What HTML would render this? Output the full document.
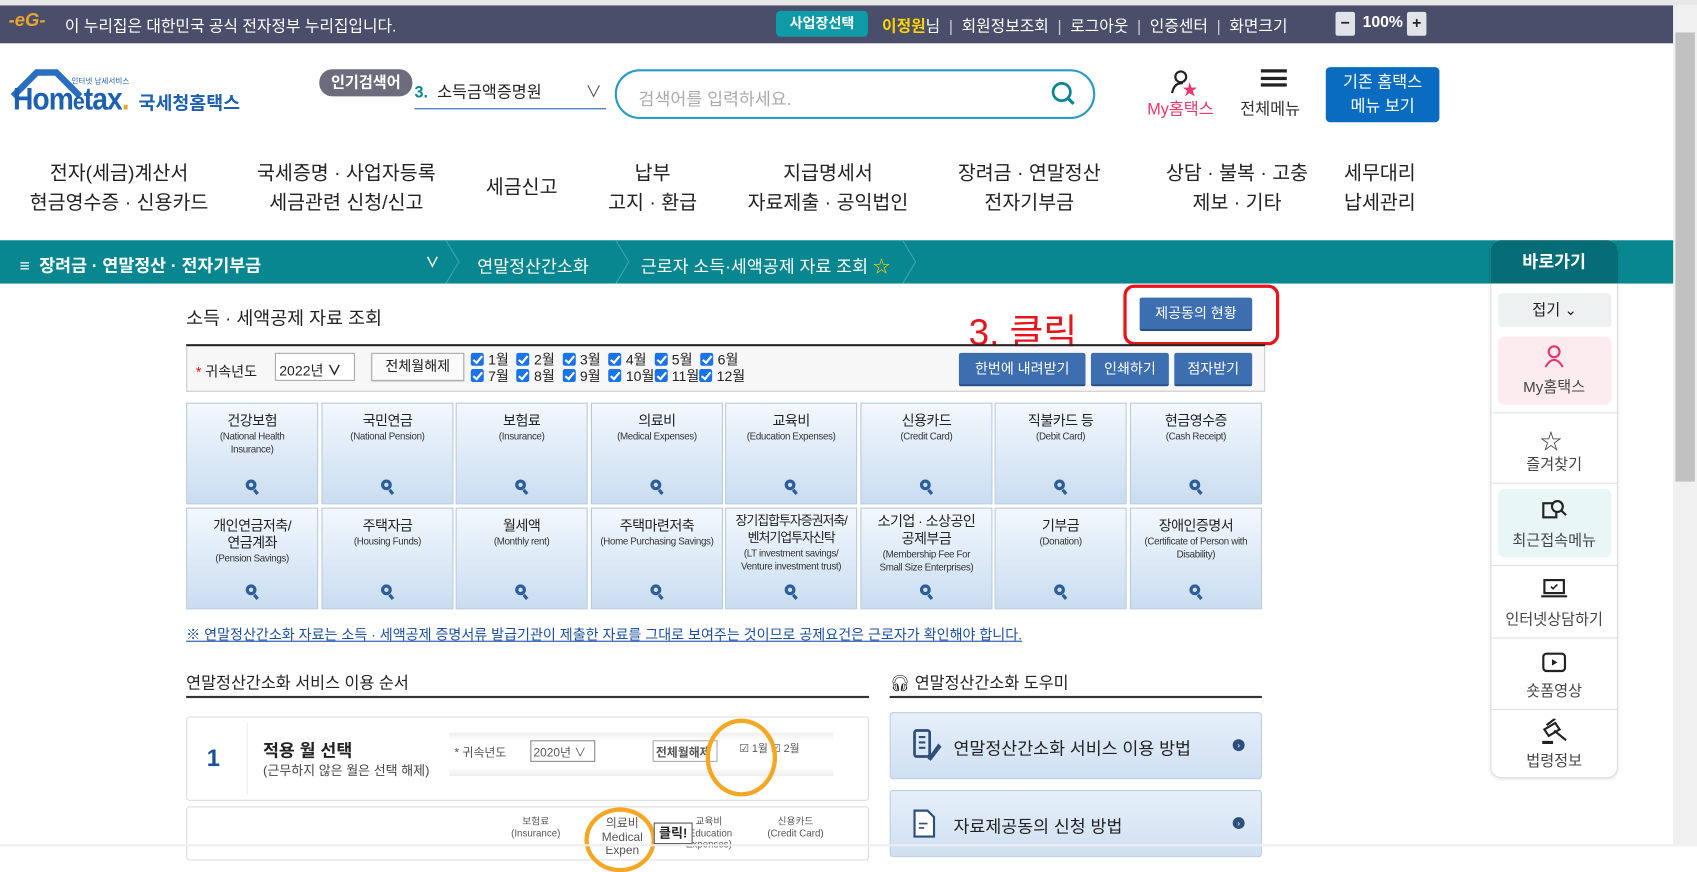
<!DOCTYPE html>
<html><head><meta charset="utf-8"><style>
*{box-sizing:border-box;margin:0;padding:0}
html,body{width:1697px;height:846px;overflow:hidden;background:#fff}
#w{position:absolute;left:0;top:0;width:1568px;height:782px;transform:scale(1.08227);transform-origin:0 0;font-family:"Liberation Sans","Noto Sans CJK KR",sans-serif;color:#222}
.a{position:absolute}
.top{left:0;top:5px;width:1546px;height:35px;background:#4a4e6a;color:#fff;font-size:14.6px}
.top .s{margin:0 8px;color:#ccc}
.nav{font-size:18px;text-align:center;line-height:27px;color:#222}
.teal{left:0;top:222px;width:1546px;height:40px;background:#088791;color:#fff;font-size:16px;font-weight:bold}
.tile{position:absolute;width:122px;height:94px;border:1px solid #b6c9dc;background:linear-gradient(#f3f8fd,#c9ddf0);text-align:center;font-size:12px;color:#222;padding-top:8px;line-height:14px}
.tile b{display:block;font-weight:normal;font-size:13px;line-height:16px;white-space:nowrap;letter-spacing:-.5px}
.tile small{font-size:9px;color:#333;letter-spacing:-.3px;display:block;line-height:12px;white-space:nowrap}
.tile i{position:absolute;left:54px;bottom:12px;width:10px;height:10px;border:3px solid #2e5e99;border-radius:50%}
.tile i:after{content:"";position:absolute;left:5px;top:6px;width:3px;height:5px;background:#2e5e99;transform:rotate(-40deg)}
.bb{position:absolute;background:#3d6eb0;color:#fff;font-size:13px;text-align:center;border-radius:2px;border-bottom:2px solid #274f85}
.cb{display:inline-block;width:12px;height:12px;background:#1a73e8;border-radius:2px;vertical-align:-1px;margin-right:4px;position:relative}
.cb:after{content:"";position:absolute;left:4px;top:1px;width:3px;height:7px;border:solid #fff;border-width:0 2px 2px 0;transform:rotate(40deg)}
.side{font-size:14px;color:#444;text-align:center}
</style></head><body><div id="w">
<div class="a" style="left:0;top:0;width:1568px;height:5px;background:#e8e8e8"></div>
<div class="a top">
 <span class="a" style="left:8px;top:4px;color:#e8a630;font-weight:bold;font-style:italic;font-size:17px">-eG-</span>
 <span class="a" style="left:60px;top:8px">이 누리집은 대한민국 공식 전자정부 누리집입니다.</span>
 <span class="a" style="left:717px;top:5px;width:85px;height:24px;background:#0f9aa8;border-radius:4px;text-align:center;line-height:24px;font-weight:bold;font-size:13px">사업장선택</span>
 <span class="a" style="left:815px;top:8px;white-space:nowrap"><b style="color:#ffd400">이정원</b>님<span class="s">|</span>회원정보조회<span class="s">|</span>로그아웃<span class="s">|</span>인증센터<span class="s">|</span>화면크기</span>
 <span class="a" style="left:1234px;top:6px;width:18px;height:22px;background:#e0e4e8;color:#222;text-align:center;font-weight:bold;line-height:22px;border-radius:2px">−</span>
 <span class="a" style="left:1259px;top:8px;font-weight:bold">100%</span>
 <span class="a" style="left:1300px;top:6px;width:18px;height:22px;background:#e0e4e8;color:#222;text-align:center;font-weight:bold;line-height:22px;border-radius:2px">+</span>
</div>
<div class="a" style="left:1546px;top:5px;width:22px;height:777px;background:#f0f0f0"></div>
<div class="a" style="left:1548px;top:30px;width:18px;height:415px;background:#c1c1c1"></div>
<!-- logo -->
<svg class="a" style="left:8px;top:63px" width="70" height="30"><path d="M4 26 L26 4 L44 4 L66 26" fill="none" stroke="#2a6fbf" stroke-width="6"/></svg>
<div class="a" style="left:12px;top:76px;font-size:29px;font-weight:bold;color:#1d5fb0;letter-spacing:-1px;transform:scaleX(.9);transform-origin:0 0">Hom<span style="font-size:22px">e</span>tax<span style="color:#e8a630">.</span></div>
<div class="a" style="left:66px;top:70px;font-size:7px;color:#1d5fb0">인터넷 납세서비스</div>
<div class="a" style="left:128px;top:81px;font-size:17px;font-weight:bold;color:#1d5fb0">국세청홈택스</div>
<div class="a" style="left:295px;top:64px;width:86px;height:25px;background:#6b6d7c;border-radius:12px;color:#fff;font-size:14px;font-weight:bold;text-align:center;line-height:25px">인기검색어</div>
<div class="a" style="left:383px;top:74px;width:177px;height:27px;border-bottom:1px solid #1d5fb0;font-size:15px"><b style="color:#0a8791">3.</b>&nbsp; 소득금액증명원<span style="position:absolute;right:4px;color:#555">∨</span></div>
<div class="a" style="left:568px;top:64px;width:444px;height:46px;border:2px solid #2a9ac8;border-radius:24px;font-size:16px;color:#aaa;padding:12px 20px">검색어를 입력하세요.</div>
<svg class="a" style="left:970px;top:74px" width="26" height="26"><circle cx="11" cy="11" r="8" fill="none" stroke="#0a8791" stroke-width="2.5"/><path d="M17 17 L22 22" stroke="#0a8791" stroke-width="3"/></svg>
<svg class="a" style="left:1080px;top:64px" width="30" height="26"><circle cx="11" cy="7" r="5" fill="none" stroke="#222" stroke-width="2"/><path d="M3 22 Q5 12 13 13" fill="none" stroke="#222" stroke-width="2"/><path d="M19 12 L21 17 L26 17 L22 20 L24 25 L19 22 L15 25 L17 20 L13 17 L18 17Z" fill="#e8366a"/></svg>
<div class="a" style="left:1060px;top:90px;font-size:15px;color:#e8366a">My홈택스</div>
<div class="a" style="left:1165px;top:64px;width:24px;height:16px;border-top:3px solid #222;border-bottom:3px solid #222"><div style="margin-top:4px;height:3px;background:#222"></div></div>
<div class="a" style="left:1146px;top:90px;font-size:15px;color:#333">전체메뉴</div>
<div class="a" style="left:1225px;top:62px;width:105px;height:51px;background:#0a6cc0;border-radius:4px;color:#fff;font-size:15px;text-align:center;line-height:22px;padding-top:4px">기존 홈택스<br>메뉴 보기</div>
<!-- nav -->
<div class="a nav" style="left:20px;top:147px;width:180px">전자(세금)계산서<br>현금영수증 · 신용카드</div>
<div class="a nav" style="left:220px;top:147px;width:200px">국세증명 · 사업자등록<br>세금관련 신청/신고</div>
<div class="a nav" style="left:432px;top:160px;width:100px">세금신고</div>
<div class="a nav" style="left:553px;top:147px;width:100px">납부<br>고지 · 환급</div>
<div class="a nav" style="left:675px;top:147px;width:180px">지급명세서<br>자료제출 · 공익법인</div>
<div class="a nav" style="left:861px;top:147px;width:180px">장려금 · 연말정산<br>전자기부금</div>
<div class="a nav" style="left:1053px;top:147px;width:180px">상담 · 불복 · 고충<br>제보 · 기타</div>
<div class="a nav" style="left:1225px;top:147px;width:100px">세무대리<br>납세관리</div>
<!-- teal bar -->
<div class="a teal">
 <span class="a" style="left:18px;top:10px">≡ &nbsp;장려금 · 연말정산 · 전자기부금</span>
 <span class="a" style="left:393px;top:10px;font-size:13px">∨</span>
 <svg class="a" style="left:410px;top:0" width="20" height="40"><path d="M2 0 L14 20 L2 40" fill="none" stroke="#3aa5ad" stroke-width="1"/></svg>
 <span class="a" style="left:441px;top:11px;font-weight:normal">연말정산간소화</span>
 <svg class="a" style="left:567px;top:0" width="20" height="40"><path d="M2 0 L14 20 L2 40" fill="none" stroke="#3aa5ad" stroke-width="1"/></svg>
 <span class="a" style="left:592px;top:11px;font-weight:normal">근로자 소득·세액공제 자료 조회 <span style="color:#ffd400">☆</span></span>
 <svg class="a" style="left:832px;top:0" width="20" height="40"><path d="M2 0 L14 20 L2 40" fill="none" stroke="#3aa5ad" stroke-width="1"/></svg>
</div>
<!-- side panel -->
<div class="a" style="left:1377px;top:222px;width:118px;height:497px;background:#fff;border:1px solid #ddd;border-radius:10px;box-shadow:0 1px 3px rgba(0,0,0,.1)"></div>
<div class="a" style="left:1377px;top:222px;width:118px;height:40px;background:#066c76;border-radius:10px 10px 0 0;color:#fff;font-weight:bold;font-size:16px;text-align:center;line-height:42px">바로가기</div>
<div class="a side" style="left:1384px;top:271px;width:105px;height:31px;background:#eef1f1;border-radius:4px;line-height:31px;color:#222">접기 ⌄</div>
<div class="a side" style="left:1384px;top:311px;width:105px;height:63px;background:#fcebef;border-radius:6px"></div>
<svg class="a" style="left:1425px;top:318px" width="22" height="22"><circle cx="11" cy="7" r="5" fill="none" stroke="#e8366a" stroke-width="2"/><path d="M3 21 Q11 8 19 21" fill="none" stroke="#e8366a" stroke-width="2"/></svg>
<div class="a side" style="left:1377px;top:347px;width:118px">My홈택스</div>
<div class="a" style="left:1378px;top:381px;width:116px;height:1px;background:#e0e0e0"></div>
<div class="a" style="left:1423px;top:392px;font-size:20px;color:#333">☆</div>
<div class="a side" style="left:1377px;top:419px;width:118px">즐겨찾기</div>
<div class="a" style="left:1378px;top:446px;width:116px;height:1px;background:#e0e0e0"></div>
<div class="a" style="left:1384px;top:452px;width:105px;height:63px;background:#e8f6f6;border-radius:6px"></div>
<svg class="a" style="left:1424px;top:460px" width="24" height="22"><rect x="2" y="5" width="12" height="13" fill="none" stroke="#222" stroke-width="2"/><circle cx="15" cy="8" r="5" fill="#e8f6f6" stroke="#222" stroke-width="2"/><path d="M19 12 L23 16" stroke="#222" stroke-width="2"/></svg>
<div class="a side" style="left:1377px;top:489px;width:118px">최근접속메뉴</div>
<div class="a" style="left:1378px;top:522px;width:116px;height:1px;background:#e0e0e0"></div>
<svg class="a" style="left:1423px;top:534px" width="26" height="20"><rect x="4" y="2" width="18" height="12" fill="none" stroke="#222" stroke-width="2"/><path d="M1 17 H25" stroke="#222" stroke-width="2"/><path d="M10 8 L12 10 L16 6" stroke="#222" fill="none" stroke-width="1.5"/></svg>
<div class="a side" style="left:1377px;top:562px;width:118px">인터넷상담하기</div>
<div class="a" style="left:1378px;top:589px;width:116px;height:1px;background:#e0e0e0"></div>
<svg class="a" style="left:1424px;top:602px" width="24" height="20"><rect x="2" y="2" width="20" height="16" rx="3" fill="none" stroke="#222" stroke-width="2"/><path d="M10 7 L15 10 L10 13Z" fill="#222"/></svg>
<div class="a side" style="left:1377px;top:628px;width:118px">숏폼영상</div>
<div class="a" style="left:1378px;top:655px;width:116px;height:1px;background:#e0e0e0"></div>
<svg class="a" style="left:1423px;top:664px" width="26" height="24"><path d="M6 6 L14 0 M4 10 L14 4 L18 10 L8 16Z M13 11 L24 20" stroke="#222" stroke-width="2" fill="none"/><path d="M2 22 H12" stroke="#222" stroke-width="3"/></svg>
<div class="a side" style="left:1377px;top:693px;width:118px">법령정보</div>
<!-- content -->
<div class="a" style="left:172px;top:280px;font-size:17px">소득 · 세액공제 자료 조회</div>
<div class="a" style="left:895px;top:280px;font-size:34px;color:#e8141b">3. 클릭</div>
<div class="a" style="left:1038px;top:263px;width:144px;height:56px;border:3px solid #e8141b;border-radius:10px"></div>
<div class="bb" style="left:1053px;top:275px;width:104px;height:31px;line-height:29px">제공동의 현황</div>
<div class="a" style="left:172px;top:318px;width:997px;height:2px;background:#222"></div>
<div class="a" style="left:172px;top:320px;width:997px;height:42px;background:#f7f7f7;border:1px solid #ccc;border-top:none;font-size:13px">
 <span class="a" style="left:8px;top:13px"><span style="color:#e00">*</span> 귀속년도</span>
 <span class="a" style="left:81px;top:6px;width:74px;height:26px;border:1px solid #aaa;background:#fff;padding:5px 3px">2022년 <b>∨</b></span>
 <span class="a" style="left:170px;top:6px;width:86px;height:26px;border:1px solid #aaa;background:#fafafa;text-align:center;line-height:24px;box-shadow:0 1px 1px #ccc">전체월해제</span>
 <div class="a" style="left:262px;top:5px;line-height:15px;word-spacing:0">
  <span class="cb"></span>1월 &nbsp;<span class="cb"></span>2월 &nbsp;<span class="cb"></span>3월 &nbsp;<span class="cb"></span>4월 &nbsp;<span class="cb"></span>5월 &nbsp;<span class="cb"></span>6월<br>
  <span class="cb"></span>7월 &nbsp;<span class="cb"></span>8월 &nbsp;<span class="cb"></span>9월 &nbsp;<span class="cb"></span>10월<span class="cb"></span>11월<span class="cb"></span>12월</div>
</div>
<div class="bb" style="left:886px;top:326px;width:117px;height:31px;line-height:29px">한번에 내려받기</div>
<div class="bb" style="left:1008px;top:326px;width:72px;height:31px;line-height:29px">인쇄하기</div>
<div class="bb" style="left:1085px;top:326px;width:72px;height:31px;line-height:29px">점자받기</div>
<!-- tiles -->
<div class="tile" style="left:172px;top:372px"><b>건강보험</b><small>(National Health<br>Insurance)</small><i></i></div>
<div class="tile" style="left:297px;top:372px"><b>국민연금</b><small>(National Pension)</small><i></i></div>
<div class="tile" style="left:421px;top:372px"><b>보험료</b><small>(Insurance)</small><i></i></div>
<div class="tile" style="left:546px;top:372px"><b>의료비</b><small>(Medical Expenses)</small><i></i></div>
<div class="tile" style="left:670px;top:372px"><b>교육비</b><small>(Education Expenses)</small><i></i></div>
<div class="tile" style="left:795px;top:372px"><b>신용카드</b><small>(Credit Card)</small><i></i></div>
<div class="tile" style="left:919px;top:372px"><b>직불카드 등</b><small>(Debit Card)</small><i></i></div>
<div class="tile" style="left:1044px;top:372px"><b>현금영수증</b><small>(Cash Receipt)</small><i></i></div>
<div class="tile" style="left:172px;top:469px"><b>개인연금저축/<br>연금계좌</b><small>(Pension Savings)</small><i></i></div>
<div class="tile" style="left:297px;top:469px"><b>주택자금</b><small>(Housing Funds)</small><i></i></div>
<div class="tile" style="left:421px;top:469px"><b>월세액</b><small>(Monthly rent)</small><i></i></div>
<div class="tile" style="left:546px;top:469px"><b>주택마련저축</b><small>(Home Purchasing Savings)</small><i></i></div>
<div class="tile" style="left:670px;top:469px;padding-top:3px"><b style="font-size:12px;letter-spacing:-1px">장기집합투자증권저축/<br>벤처기업투자신탁</b><small>(LT investment savings/<br>Venture investment trust)</small><i></i></div>
<div class="tile" style="left:795px;top:469px;padding-top:4px"><b>소기업 · 소상공인<br>공제부금</b><small>(Membership Fee For<br>Small Size Enterprises)</small><i></i></div>
<div class="tile" style="left:919px;top:469px"><b>기부금</b><small>(Donation)</small><i></i></div>
<div class="tile" style="left:1044px;top:469px"><b>장애인증명서</b><small>(Certificate of Person with<br>Disability)</small><i></i></div>
<div class="a" style="left:172px;top:576px;font-size:13px;color:#1a4fa0;text-decoration:underline">※ 연말정산간소화 자료는 소득 · 세액공제 증명서류 발급기관이 제출한 자료를 그대로 보여주는 것이므로 공제요건은 근로자가 확인해야 합니다.</div>
<div class="a" style="left:172px;top:620px;font-size:15px">연말정산간소화 서비스 이용 순서</div>
<div class="a" style="left:172px;top:643px;width:631px;height:2px;background:#333"></div>
<div class="a" style="left:822px;top:620px;font-size:15px">🎧︎ 연말정산간소화 도우미</div>
<div class="a" style="left:822px;top:643px;width:344px;height:2px;background:#333"></div>
<div class="a" style="left:172px;top:662px;width:631px;height:78px;border:1px solid #ddd;border-radius:3px"></div>
<div class="a" style="left:228px;top:668px;width:1px;height:66px;background:#eee"></div>
<div class="a" style="left:191px;top:688px;font-size:22px;color:#1a4f9a;font-weight:bold">1</div>
<div class="a" style="left:243px;top:680px;font-size:16px;font-weight:bold">적용 월 선택</div>
<div class="a" style="left:243px;top:703px;font-size:12px;color:#444">(근무하지 않은 월은 선택 해제)</div>
<div class="a" style="left:415px;top:677px;width:355px;height:40px;background:linear-gradient(#eee,#fff 20%,#fff 80%,#eee);font-size:11px;color:#555">
 <span class="a" style="left:5px;top:10px">* 귀속년도</span>
 <span class="a" style="left:75px;top:7px;width:60px;height:20px;border:1px solid #888;background:#fff;padding:2px">2020년 ∨</span>
 <span class="a" style="left:188px;top:7px;width:60px;height:20px;border:1px solid #aaa;background:#fff;padding:2px;font-weight:bold">전체월해제</span>
 <span class="a" style="left:268px;top:6px;font-size:10px">☑ 1월 ☑ 2월</span>
</div>
<div class="a" style="left:652px;top:664px;width:66px;height:72px;border:4px solid #f5a623;border-radius:50%"></div>
<div class="a" style="left:172px;top:745px;width:631px;height:50px;border:1px solid #ddd;border-radius:3px"></div>
<div class="a" style="left:460px;top:752px;width:340px;height:30px;font-size:9px;color:#555;text-align:center">
 <span class="a" style="left:0;width:70px">보험료<br>(Insurance)</span><span class="a" style="left:80px;width:70px;font-size:11px">의료비<br>Medical Expen</span><span class="a" style="left:160px;width:70px">교육비<br>(Education Expenses)</span><span class="a" style="left:240px;width:70px">신용카드<br>(Credit Card)</span></div>
<div class="a" style="left:540px;top:746px;width:66px;height:60px;border:4px solid #f5a623;border-radius:50%"></div>
<div class="a" style="left:604px;top:760px;width:36px;height:20px;background:#fff;border:1px solid #555;font-size:12px;font-weight:bold;text-align:center">클릭!</div>
<div class="a" style="left:822px;top:658px;width:344px;height:62px;border:1px solid #b9cde2;border-radius:3px;background:linear-gradient(#e6eff9,#cfe0f2)"></div>
<svg class="a" style="left:843px;top:673px" width="30" height="32"><rect x="2" y="2" width="14" height="24" rx="2" fill="none" stroke="#2e4f7a" stroke-width="2.5"/><path d="M6 8h6M6 13h6M6 18h6" stroke="#2e4f7a" stroke-width="2"/><path d="M14 28 L24 14 L27 17 L17 30Z" fill="#2e4f7a"/></svg>
<div class="a" style="left:881px;top:678px;font-size:16px">연말정산간소화 서비스 이용 방법</div>
<div class="a" style="left:1139px;top:683px;width:11px;height:11px;border-radius:50%;background:#2e4f7a;color:#fff;font-size:8px;text-align:center;line-height:11px">›</div>
<div class="a" style="left:822px;top:730px;width:344px;height:62px;border:1px solid #b9cde2;border-radius:3px;background:linear-gradient(#e6eff9,#cfe0f2)"></div>
<svg class="a" style="left:843px;top:747px" width="24" height="28"><path d="M2 2 H14 L20 8 V26 H2Z" fill="#fff" stroke="#2e4f7a" stroke-width="2"/><path d="M6 14h8M6 18h5" stroke="#2e4f7a" stroke-width="1.5"/></svg>
<div class="a" style="left:881px;top:750px;font-size:16px">자료제공동의 신청 방법</div>
<div class="a" style="left:1139px;top:755px;width:11px;height:11px;border-radius:50%;background:#2e4f7a;color:#fff;font-size:8px;text-align:center;line-height:11px">›</div>
<div class="a" style="left:0;top:780px;width:1546px;height:2px;background:#eee"></div>
</div></body></html>
